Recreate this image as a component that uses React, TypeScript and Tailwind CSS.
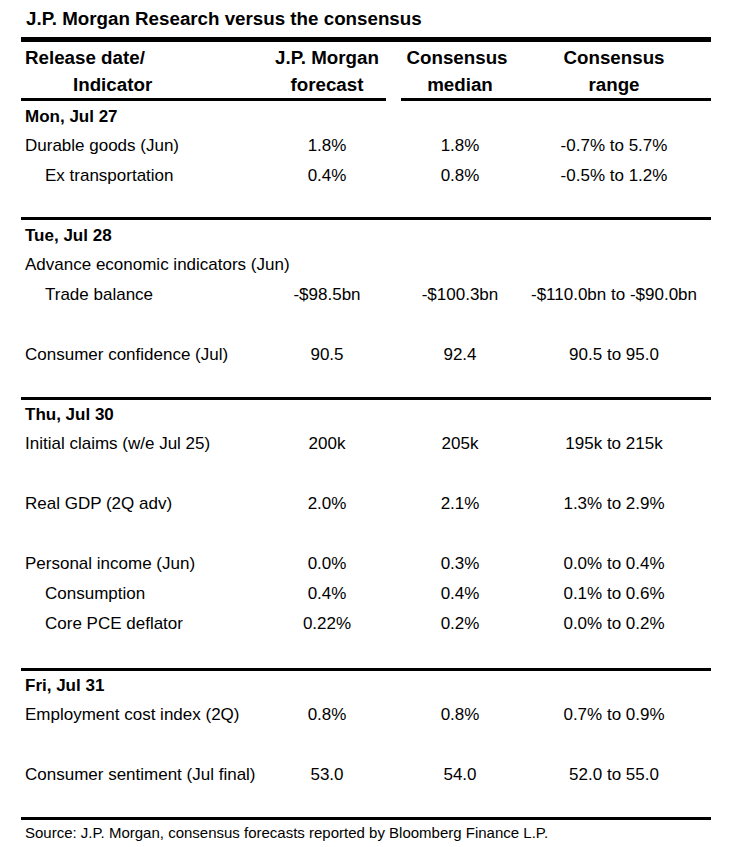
import React from 'react';

type Row = {
  label?: string;
  indent?: boolean;
  values?: [string, string, string];
};

type Section = {
  date: string;
  rows: Row[];
  pad: string;
};

const sections: Section[] = [
  {
    date: 'Mon, Jul 27',
    pad: 'pt-[2px] pb-[26px]',
    rows: [
      { label: 'Durable goods (Jun)', values: ['1.8%', '1.8%', '-0.7% to 5.7%'] },
      { label: 'Ex transportation', indent: true, values: ['0.4%', '0.8%', '-0.5% to 1.2%'] },
    ],
  },
  {
    date: 'Tue, Jul 28',
    pad: 'pt-[2px] pb-[27px]',
    rows: [
      { label: 'Advance economic indicators (Jun)' },
      { label: 'Trade balance', indent: true, values: ['-$98.5bn', '-$100.3bn', '-$110.0bn to -$90.0bn'] },
      {},
      { label: 'Consumer confidence (Jul)', values: ['90.5', '92.4', '90.5 to 95.0'] },
    ],
  },
  {
    date: 'Thu, Jul 30',
    pad: 'pt-[1px] pb-[29px]',
    rows: [
      { label: 'Initial claims (w/e Jul 25)', values: ['200k', '205k', '195k to 215k'] },
      {},
      { label: 'Real GDP (2Q adv)', values: ['2.0%', '2.1%', '1.3% to 2.9%'] },
      {},
      { label: 'Personal income (Jun)', values: ['0.0%', '0.3%', '0.0% to 0.4%'] },
      { label: 'Consumption', indent: true, values: ['0.4%', '0.4%', '0.1% to 0.6%'] },
      { label: 'Core PCE deflator', indent: true, values: ['0.22%', '0.2%', '0.0% to 0.2%'] },
    ],
  },
  {
    date: 'Fri, Jul 31',
    pad: 'pt-[1px] pb-[27px]',
    rows: [
      { label: 'Employment cost index (2Q)', values: ['0.8%', '0.8%', '0.7% to 0.9%'] },
      {},
      { label: 'Consumer sentiment (Jul final)', values: ['53.0', '54.0', '52.0 to 55.0'] },
    ],
  },
];

const cols = 'grid grid-cols-[239px_134px_132px_176px]';

function DataRow({ row }: { row: Row }) {
  return (
    <div className={`${cols} h-[30px] leading-[30px] text-[17px]`}>
      <div className={`whitespace-nowrap ${row.indent ? 'pl-[24px]' : 'pl-[4px]'}`}>{row.label}</div>
      {row.values ? (
        row.values.map((v, i) => (
          <div key={i} className="text-center whitespace-nowrap">
            {v}
          </div>
        ))
      ) : (
        <>
          <div />
          <div />
          <div />
        </>
      )}
    </div>
  );
}

export default function App() {
  return (
    <div className="w-[750px] h-[847px] bg-white text-black font-['Liberation_Sans',Arial,sans-serif] overflow-hidden">
      <div className="pl-[21px] w-[711px]">
        <div className="h-[37px] pt-[7px] pl-[5px] leading-[24px] text-[18.75px] font-bold whitespace-nowrap">
          J.P. Morgan Research versus the consensus
        </div>
        <div className="h-[5px] bg-black" />

        <div className={`${cols} pt-[2px] text-[18.75px] font-bold leading-[27px] h-[56px]`}>
          <div className="pl-[4px] whitespace-nowrap">
            <div>Release date/</div>
            <div className="pl-[48px]">Indicator</div>
          </div>
          <div className="text-center whitespace-nowrap">
            <div>J.P. Morgan</div>
            <div>forecast</div>
          </div>
          <div className="text-center whitespace-nowrap">
            <div className="pr-[6px]">Consensus</div>
            <div>median</div>
          </div>
          <div className="text-center whitespace-nowrap">
            <div>Consensus</div>
            <div>range</div>
          </div>
        </div>
        <div className="flex h-[3px]">
          <div className="w-[365px] bg-black" />
          <div className="w-[15px]" />
          <div className="flex-1 bg-black" />
        </div>

        {sections.map((s, si) => (
          <div key={si}>
            <div className={s.pad}>
              <div className="h-[28px] leading-[28px] pl-[4px] text-[17px] font-bold">{s.date}</div>
              {s.rows.map((r, ri) => (
                <DataRow key={ri} row={r} />
              ))}
            </div>
            <div className="h-[3px] bg-black" />
          </div>
        ))}

        <div className="pl-[4px] leading-[26px] text-[15px] whitespace-nowrap">
          Source: J.P. Morgan, consensus forecasts reported by Bloomberg Finance L.P.
        </div>
      </div>
    </div>
  );
}
